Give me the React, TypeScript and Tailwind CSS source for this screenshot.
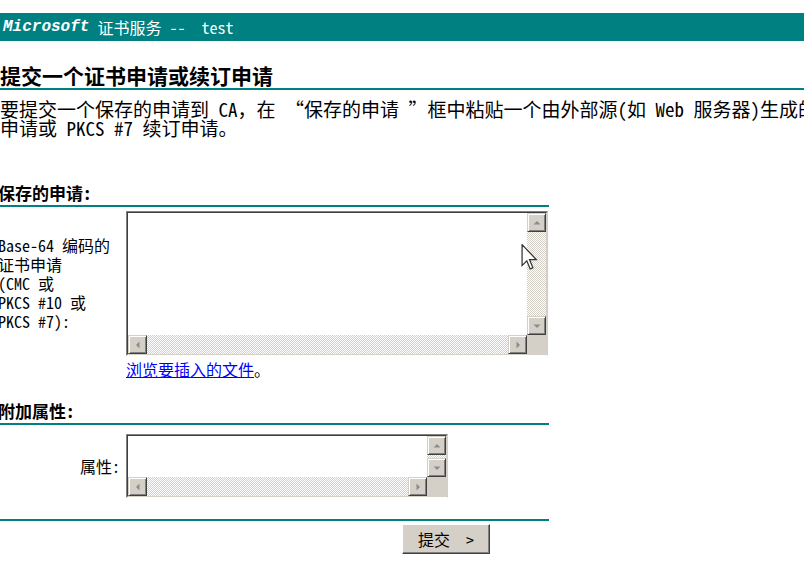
import React from 'react';

const FONT = "font-['Noto_Sans_Mono_CJK_SC','Liberation_Mono','Noto_Sans_CJK_SC',monospace]";

const Arrow = ({ dir }: { dir: 'up' | 'down' | 'left' | 'right' }) => {
  const pts = {
    up: '0.5,5.5 4,2 7.5,5.5',
    down: '0.5,2.5 4,6 7.5,2.5',
    left: '5.5,0.5 2,4 5.5,7.5',
    right: '2.5,0.5 6,4 2.5,7.5',
  }[dir];
  return (
    <svg width="8" height="8" viewBox="0 0 8 8">
      <polygon points={pts} fill="#8c8c8c" />
    </svg>
  );
};

const ScrollBtn = ({ dir }: { dir: 'up' | 'down' | 'left' | 'right' }) => (
  <div className="w-[19px] h-[19px] shrink-0 flex items-center justify-center bg-[#d4d0c8] border border-t-[#d4d0c8] border-l-[#d4d0c8] border-b-[#404040] border-r-[#404040] shadow-[inset_1px_1px_0_#ffffff,inset_-1px_-1px_0_#808080]">
    <Arrow dir={dir} />
  </div>
);

const Track = ({ className }: { className: string }) => (
  <div className={`${className} bg-[repeating-conic-gradient(#d4d0c8_0_25%,#ffffff_0_50%)] bg-[length:2px_2px]`} />
);

// Win classic sunken textarea with both scrollbars
const TextBox = ({ className }: { className: string }) => (
  <div className={`${className} border border-t-[#808080] border-l-[#808080] border-b-white border-r-[#d4d0c8]`}>
    <div className="h-full flex flex-col border border-t-[#404040] border-l-[#404040] border-b-[#d4d0c8] border-r-[#d4d0c8]">
      <div className="flex flex-1 min-h-0">
        <div className="flex-1 bg-white" />
        <div className="flex flex-col w-[19px]">
          <ScrollBtn dir="up" />
          <Track className="flex-1" />
          <ScrollBtn dir="down" />
        </div>
      </div>
      <div className="flex h-[19px]">
        <ScrollBtn dir="left" />
        <Track className="flex-1" />
        <ScrollBtn dir="right" />
        <div className="w-[19px] bg-[#d4d0c8]" />
      </div>
    </div>
  </div>
);

const SectionTitle = ({ children }: { children: React.ReactNode }) => (
  <div className="w-[551px] font-bold text-[17px] leading-[19px] pb-[3px] border-b-2 border-[#008080]">
    {children}
  </div>
);

export default function App() {
  return (
    <div className={`relative w-[804px] h-[569px] overflow-hidden bg-white text-black ${FONT}`}>
      <div className="pt-[13px]">
        <div className="h-[28px] bg-[#008080] text-white flex items-center pl-[3px] text-[16px] whitespace-pre">
          <span className="font-['Liberation_Mono',monospace] font-bold italic">Microsoft</span>
          <span> 证书服务 --  test</span>
        </div>
      </div>

      <div className="-ml-[2px]">
        <div className="mt-[22px] pl-[2px] font-bold text-[21px] leading-[24px] pb-[1px] border-b-2 border-[#008080]">
          提交一个证书申请或续订申请
        </div>

        <p className="mt-[9px] pl-[2px] text-[19px] leading-[19px] w-[900px]">
          要提交一个保存的申请到 CA，在 “保存的申请 ”框中粘贴一个由外部源(如 Web 服务器)生成的
          <br />
          申请或 PKCS #7 续订申请。
        </p>

        <div className="mt-[46px]">
          <SectionTitle>保存的申请:</SectionTitle>
        </div>

        <div className="mt-[4px] flex items-center">
          <div className="w-[128px] text-[16px] leading-[19px]">
            Base-64 编码的<br />证书申请<br />(CMC 或<br />PKCS #10 或<br />PKCS #7):
          </div>
          <TextBox className="w-[422px] h-[145px]" />
        </div>

        <div className="mt-[4px] pl-[128px] text-[16px] leading-[19px]">
          <a href="#" className="text-[#0000ff] underline">浏览要插入的文件</a>。
        </div>

        <div className="mt-[22px]">
          <SectionTitle>附加属性:</SectionTitle>
        </div>

        <div className="mt-[9px] flex items-center">
          <div className="w-[128px] pr-[6px] text-right text-[16px] leading-[19px]">属性:</div>
          <TextBox className="w-[322px] h-[64px]" />
        </div>

        <div className="mt-[21px] w-[551px] border-t-2 border-[#008080]" />

        <div className="mt-[3px] ml-[404px]">
          <button className="w-[88px] h-[30px] bg-[#d4d0c8] text-[16px] whitespace-pre border border-t-white border-l-white border-b-[#404040] border-r-[#404040] shadow-[inset_-1px_-1px_0_#808080]">
            提交  &gt;
          </button>
        </div>
      </div>

      <svg className="absolute left-[521px] top-[244px]" width="17" height="27" viewBox="0 0 12 20">
        <path d="M0.5 0.5 L0.5 16 L4 12.5 L6.5 18.5 L8.5 17.5 L6 11.5 L11 11.5 Z" fill="white" stroke="#303030" strokeWidth="0.9" strokeLinejoin="miter" />
      </svg>
    </div>
  );
}
